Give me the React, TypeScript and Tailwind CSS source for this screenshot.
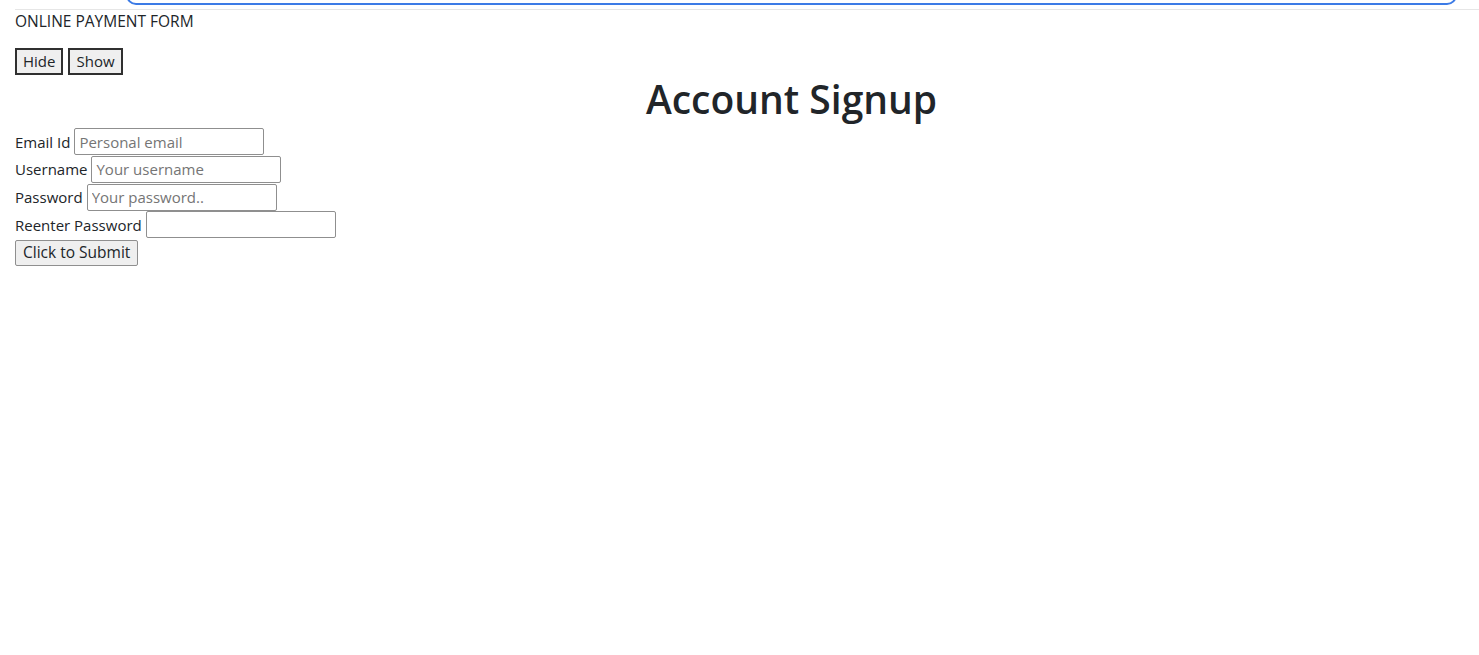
import React from 'react';

const FONT = "font-['Segoe_UI','Open_Sans','Noto_Sans',sans-serif]";

const Field = ({ label, placeholder, type = 'text' }: { label: string; placeholder?: string; type?: string }) => (
  <div className="flex items-center h-[27.67px]">
    <label className="mr-1 whitespace-nowrap">{label}</label>
    <input
      type={type}
      placeholder={placeholder}
      className="w-[190px] h-[27px] px-1 border border-[#8f8f8f] rounded-[2px] bg-white text-[15px] placeholder:text-[#757575] outline-none"
    />
  </div>
);

const App = () => {
  return (
    <div className={`min-h-screen w-full bg-white text-[#212529] text-[15px] ${FONT}`}>
      {/* browser address bar edge */}
      <div className="ml-[126px] w-[1331px] h-[20px] -mt-[15px] border-2 border-[#3c7be6] rounded-[15px]" />
      <div className="ml-[15px] mt-[4px] border-t border-[#e6e6e6]" />

      <div className="px-[15px]">
        <p className="mt-[2px] leading-[18px] text-[15.5px] uppercase">ONLINE PAYMENT FORM</p>

        <div className="flex gap-[5px] mt-[18px]">
          <button className="h-[27px] px-[6px] border-2 border-[#303030] bg-[#efefef]">Hide</button>
          <button className="h-[27px] px-[6px] border-2 border-[#303030] bg-[#efefef]">Show</button>
        </div>

        <h1 className="pl-[104px] text-center text-[39px] font-semibold leading-[48px] mb-[5px]">Account Signup</h1>

        <form className="flex flex-col items-start">
          <Field label="Email Id" placeholder="Personal email" type="email" />
          <Field label="Username" placeholder="Your username" />
          <Field label="Password" placeholder="Your password.." type="password" />
          <Field label="Reenter Password" type="password" />
          <button type="button" className="mt-[1px] h-[26px] px-[7px] border border-[#8f8f8f] rounded-[2px] bg-[#efefef] text-[15.5px]">
            Click to Submit
          </button>
        </form>
      </div>
    </div>
  );
};

export default App;
